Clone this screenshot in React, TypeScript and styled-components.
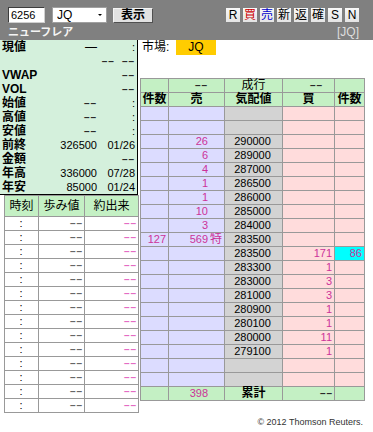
import React from 'react';
import styled, { createGlobalStyle } from 'styled-components';

const PINK = '#cc3399';

const GlobalStyle = createGlobalStyle`
  html, body {
    margin: 0;
    padding: 0;
    background: #ffffff;
  }
  body {
    font-family: 'Liberation Sans', 'Noto Sans CJK JP', sans-serif;
    font-size: 11px;
    color: #000;
  }
`;

type Level = {
  sellCount?: string;
  sell?: string;
  mark?: string;
  price?: string;
  buy?: string;
  buyCount?: string;
  hot?: boolean;
};

const book: Level[] = [
  {},
  {},
  { sell: '26', price: '290000' },
  { sell: '6', price: '289000' },
  { sell: '4', price: '287000' },
  { sell: '1', price: '286500' },
  { sell: '1', price: '286000' },
  { sell: '10', price: '285000' },
  { sell: '3', price: '284000' },
  { sellCount: '127', sell: '569', mark: '特', price: '283500' },
  { price: '283500', buy: '171', buyCount: '86', hot: true },
  { price: '283300', buy: '1' },
  { price: '283000', buy: '3' },
  { price: '281000', buy: '3' },
  { price: '280900', buy: '1' },
  { price: '280100', buy: '1' },
  { price: '280000', buy: '11' },
  { price: '279100', buy: '1' },
  {},
  {},
];

const quotes = [
  { label: '現値', value: '—', date: ':' },
  { label: '', value: '', date: '' },
  { label: 'VWAP', value: '', date: '--' },
  { label: 'VOL', value: '', date: '--' },
  { label: '始値', value: '--', date: ':' },
  { label: '高値', value: '--', date: ':' },
  { label: '安値', value: '--', date: ':' },
  { label: '前終', value: '326500', date: '01/26' },
  { label: '金額', value: '', date: '--' },
  { label: '年高', value: '336000', date: '07/28' },
  { label: '年安', value: '85000', date: '01/24' },
];

const sideButtons = [
  { text: 'R', color: '#000' },
  { text: '買', color: '#cc0000' },
  { text: '売', color: '#0000cc' },
  { text: '新', color: '#000' },
  { text: '返', color: '#000' },
  { text: '確', color: '#000' },
  { text: 'S', color: '#000' },
  { text: 'N', color: '#000' },
];

const Dash: React.FC<{ color?: string }> = ({ color }) => <DashText $color={color}>––</DashText>;

const show = (v: string, color?: string) => (v === '--' ? <Dash color={color} /> : v);

export default function App() {
  return (
    <Page>
      <GlobalStyle />
      <Header>
        <Toolbar>
          <CodeInput defaultValue="6256" readOnly />
          <SelectWrap>
            <MarketSelect defaultValue="JQ">
              <option value="JQ">JQ</option>
            </MarketSelect>
          </SelectWrap>
          <ShowButton type="button">表示</ShowButton>
          <SideButtons>
            {sideButtons.map((b) => (
              <SideButton key={b.text} type="button" $color={b.color}>
                {b.text}
              </SideButton>
            ))}
          </SideButtons>
        </Toolbar>
        <NameRow>
          <StockName>ニューフレア</StockName>
          <MarketTag>[JQ]</MarketTag>
        </NameRow>
      </Header>

      <Main>
        <LeftColumn>
          <Quote>
            {quotes.map((q, i) =>
              i === 1 ? (
                <React.Fragment key={i}>
                  <QLabel />
                  <ChangeCell>
                    <Dash />
                    <Dash />
                  </ChangeCell>
                </React.Fragment>
              ) : (
                <React.Fragment key={i}>
                  <QLabel>{q.label}</QLabel>
                  <QValue $wide={q.value === '—'}>{show(q.value)}</QValue>
                  <QValue>{show(q.date)}</QValue>
                </React.Fragment>
              )
            )}
          </Quote>

          <Tape>
            <colgroup>
              <Col $w={34} />
              <Col $w={46} />
              <Col $w={54} />
            </colgroup>
            <thead>
              <tr>
                <TapeHead>時刻</TapeHead>
                <TapeHead>歩み値</TapeHead>
                <TapeHead>約出来</TapeHead>
              </tr>
            </thead>
            <tbody>
              {Array.from({ length: 14 }).map((_, i) => (
                <tr key={i}>
                  <TapeCell $align="center">:</TapeCell>
                  <TapeCell>
                    <Dash color="#666666" />
                  </TapeCell>
                  <TapeCell>
                    <Dash color="#e46cc4" />
                  </TapeCell>
                </tr>
              ))}
            </tbody>
          </Tape>
        </LeftColumn>

        <RightColumn>
          <MarketRow>
            <MarketLabel>市場:</MarketLabel>
            <MarketBadge>JQ</MarketBadge>
          </MarketRow>

          <BookTable>
            <colgroup>
              <Col $w={28} />
              <Col $w={56} />
              <Col $w={58} />
              <Col $w={52} />
              <Col $w={30} />
            </colgroup>
            <thead>
              <tr>
                <BookHead />
                <BookHead $align="right" $pad={1}>
                  <Dash />
                  <Mark />
                </BookHead>
                <BookHead $align="center">成行</BookHead>
                <BookHead $align="right" $pad={11}>
                  <Dash />
                </BookHead>
                <BookHead />
              </tr>
              <tr>
                <BookHead $align="center" $bold>件数</BookHead>
                <BookHead $align="center" $bold>売</BookHead>
                <BookHead $align="center" $bold>気配値</BookHead>
                <BookHead $align="center" $bold>買</BookHead>
                <BookHead $align="center" $bold>件数</BookHead>
              </tr>
            </thead>
            <tbody>
              {book.map((lv, i) => (
                <tr key={i}>
                  <BookCell $tone="ask" $pink>{lv.sellCount}</BookCell>
                  <BookCell $tone="ask" $pink $pad={1}>
                    {lv.sell}
                    <Mark>{lv.mark}</Mark>
                  </BookCell>
                  <BookCell $tone="mid" $align="center">{lv.price}</BookCell>
                  <BookCell $tone="bid" $pink>{lv.buy}</BookCell>
                  <BookCell $tone={lv.hot ? 'hot' : 'bid'} $pink>{lv.buyCount}</BookCell>
                </tr>
              ))}
            </tbody>
            <tfoot>
              <tr>
                <BookHead />
                <BookHead $align="right" $pad={1} $pink>
                  398
                  <Mark />
                </BookHead>
                <BookHead $align="center" $bold>累計</BookHead>
                <BookHead $align="right" $pad={1}>
                  <Dash />
                </BookHead>
                <BookHead />
              </tr>
            </tfoot>
          </BookTable>
        </RightColumn>
      </Main>

      <Copyright>© 2012 Thomson Reuters.</Copyright>
    </Page>
  );
}

const Page = styled.div`
  width: 373px;
  height: 432px;
  overflow: hidden;
`;

const Header = styled.header`
  background: #808080;
  height: 40px;
  box-sizing: border-box;
  padding: 7px 14px 0 8px;
`;

const Toolbar = styled.div`
  display: flex;
  align-items: center;
  height: 16px;
`;

const CodeInput = styled.input`
  box-sizing: border-box;
  width: 37px;
  height: 16px;
  margin: 0;
  padding: 0 2px;
  border: 1px solid #3c3c3c;
  border-right-color: #d0d0d0;
  border-bottom-color: #d0d0d0;
  background: #fff;
  font: 11px 'Liberation Sans', sans-serif;
  color: #000;
  outline: none;
`;

const SelectWrap = styled.div`
  position: relative;
  margin-left: 7px;
  width: 55px;
  height: 16px;

  &::after {
    content: '';
    position: absolute;
    right: 5px;
    top: 7px;
    border-left: 2px solid transparent;
    border-right: 2px solid transparent;
    border-top: 2px solid #000;
  }
`;

const MarketSelect = styled.select`
  appearance: none;
  box-sizing: border-box;
  width: 100%;
  height: 100%;
  margin: 0;
  padding: 0 0 0 4px;
  border: 1px solid #a0a0a0;
  border-radius: 0;
  background: #fff;
  font: 12px 'Liberation Sans', sans-serif;
  color: #000;
  outline: none;
`;

const ShowButton = styled.button`
  box-sizing: border-box;
  margin: 0 0 0 6px;
  width: 40px;
  height: 15px;
  padding: 0;
  border: 1px solid;
  border-color: #f4f4f4 #505050 #505050 #f4f4f4;
  background: #e2e2e2;
  font: bold 12px 'Liberation Sans', 'Noto Sans CJK JP', sans-serif;
  line-height: 13px;
  color: #000;
`;

const SideButtons = styled.div`
  margin-left: auto;
  display: flex;
  gap: 3px;
`;

const SideButton = styled.button<{ $color: string }>`
  box-sizing: border-box;
  width: 14px;
  height: 14px;
  margin: 0;
  padding: 0;
  border: none;
  background: linear-gradient(#f8f8f8, #e4e4e4);
  font: 12px 'Liberation Sans', 'Noto Sans CJK JP', sans-serif;
  line-height: 14px;
  color: ${(p) => p.$color};
  text-align: center;
`;

const NameRow = styled.div`
  display: flex;
  justify-content: space-between;
  align-items: center;
  margin-top: 3px;
  height: 13px;
`;

const StockName = styled.span`
  color: #f4f4f4;
  font-weight: bold;
  font-size: 11px;
  line-height: 13px;
`;

const MarketTag = styled.span`
  color: #dedede;
  font-size: 12px;
  line-height: 13px;
`;

const Main = styled.div`
  display: flex;
  align-items: flex-start;
`;

const LeftColumn = styled.div`
  width: 138px;
  flex: none;
`;

const Quote = styled.div`
  background: #d4f0dc;
  border-right: 1px solid #000;
  border-bottom: 1px solid #000;
  padding: 0 2px;
  display: grid;
  grid-template-columns: 48px 47px 38px;
  grid-auto-rows: 14px;
  align-items: center;
`;

const QLabel = styled.div`
  font-weight: bold;
  font-size: 12px;
  line-height: 14px;
  white-space: nowrap;
`;

const QValue = styled.div<{ $wide?: boolean }>`
  text-align: right;
  font-size: ${(p) => (p.$wide ? 12 : 11)}px;
  line-height: 14px;
  white-space: nowrap;
`;

const ChangeCell = styled.div`
  grid-column: 2 / 4;
  display: flex;
  justify-content: flex-end;
  gap: 7px;
`;

const DashText = styled.span<{ $color?: string }>`
  font-family: 'Liberation Sans', sans-serif;
  font-size: 10px;
  font-weight: bold;
  letter-spacing: 1px;
  color: ${(p) => p.$color ?? '#2a2a2a'};
`;

const Col = styled.col<{ $w: number }>`
  width: ${(p) => p.$w}px;
`;

const Tape = styled.table`
  margin-left: 4px;
  width: 134px;
  border-collapse: collapse;
  table-layout: fixed;
`;

const TapeHead = styled.th`
  height: 20px;
  padding: 0;
  border: 1px solid #999;
  background: #c4f0c4;
  font-weight: normal;
  font-size: 12px;
  line-height: 14px;
  text-align: center;
  white-space: nowrap;
`;

const TapeCell = styled.td<{ $align?: 'center' | 'right' }>`
  height: 13px;
  padding: 0 1px 0 0;
  border: 1px solid #999;
  text-align: ${(p) => p.$align ?? 'right'};
  font-size: 11px;
  line-height: 13px;
  white-space: nowrap;
`;

const RightColumn = styled.div`
  flex: 1;
  padding-left: 2px;
`;

const MarketRow = styled.div`
  display: flex;
  align-items: center;
  height: 15px;
  padding-left: 2px;
`;

const MarketLabel = styled.span`
  font-size: 12px;
  line-height: 15px;
  width: 34px;
`;

const MarketBadge = styled.span`
  width: 40px;
  height: 15px;
  background: #ffcc00;
  font-size: 12px;
  line-height: 15px;
  text-align: center;
`;

const BookTable = styled.table`
  width: 224px;
  margin-top: 23px;
  border-collapse: collapse;
  table-layout: fixed;
`;

const tones = {
  ask: '#dcdcff',
  mid: '#d3d3d3',
  bid: '#ffdcdc',
  hot: '#00ffff',
};

const BookCell = styled.td<{ $tone: keyof typeof tones; $align?: 'center' | 'right'; $pink?: boolean; $pad?: number }>`
  height: 13px;
  padding: 0 ${(p) => p.$pad ?? 2}px 0 0;
  border: 1px solid #999;
  background: ${(p) => tones[p.$tone]};
  text-align: ${(p) => p.$align ?? 'right'};
  color: ${(p) => (p.$pink ? PINK : '#000')};
  font-size: 11px;
  line-height: 13px;
  white-space: nowrap;
  overflow: hidden;
`;

const BookHead = styled.td<{ $align?: 'center' | 'right'; $pad?: number; $bold?: boolean; $pink?: boolean }>`
  height: 13px;
  padding: 0 ${(p) => p.$pad ?? 0}px 0 0;
  border: 1px solid #999;
  background: #c4f0c4;
  text-align: ${(p) => p.$align ?? 'center'};
  color: ${(p) => (p.$pink ? PINK : '#000')};
  font-weight: ${(p) => (p.$bold ? 'bold' : 'normal')};
  font-size: ${(p) => (p.$pink ? 11 : 12)}px;
  line-height: 13px;
  white-space: nowrap;
`;

const Mark = styled.span`
  display: inline-block;
  width: 14px;
  margin-left: 1px;
  text-align: center;
  font-size: 12px;
`;

const Copyright = styled.div`
  padding: 4px 10px 0 0;
  text-align: right;
  font-size: 9px;
  line-height: 11px;
  color: #333;
`;
